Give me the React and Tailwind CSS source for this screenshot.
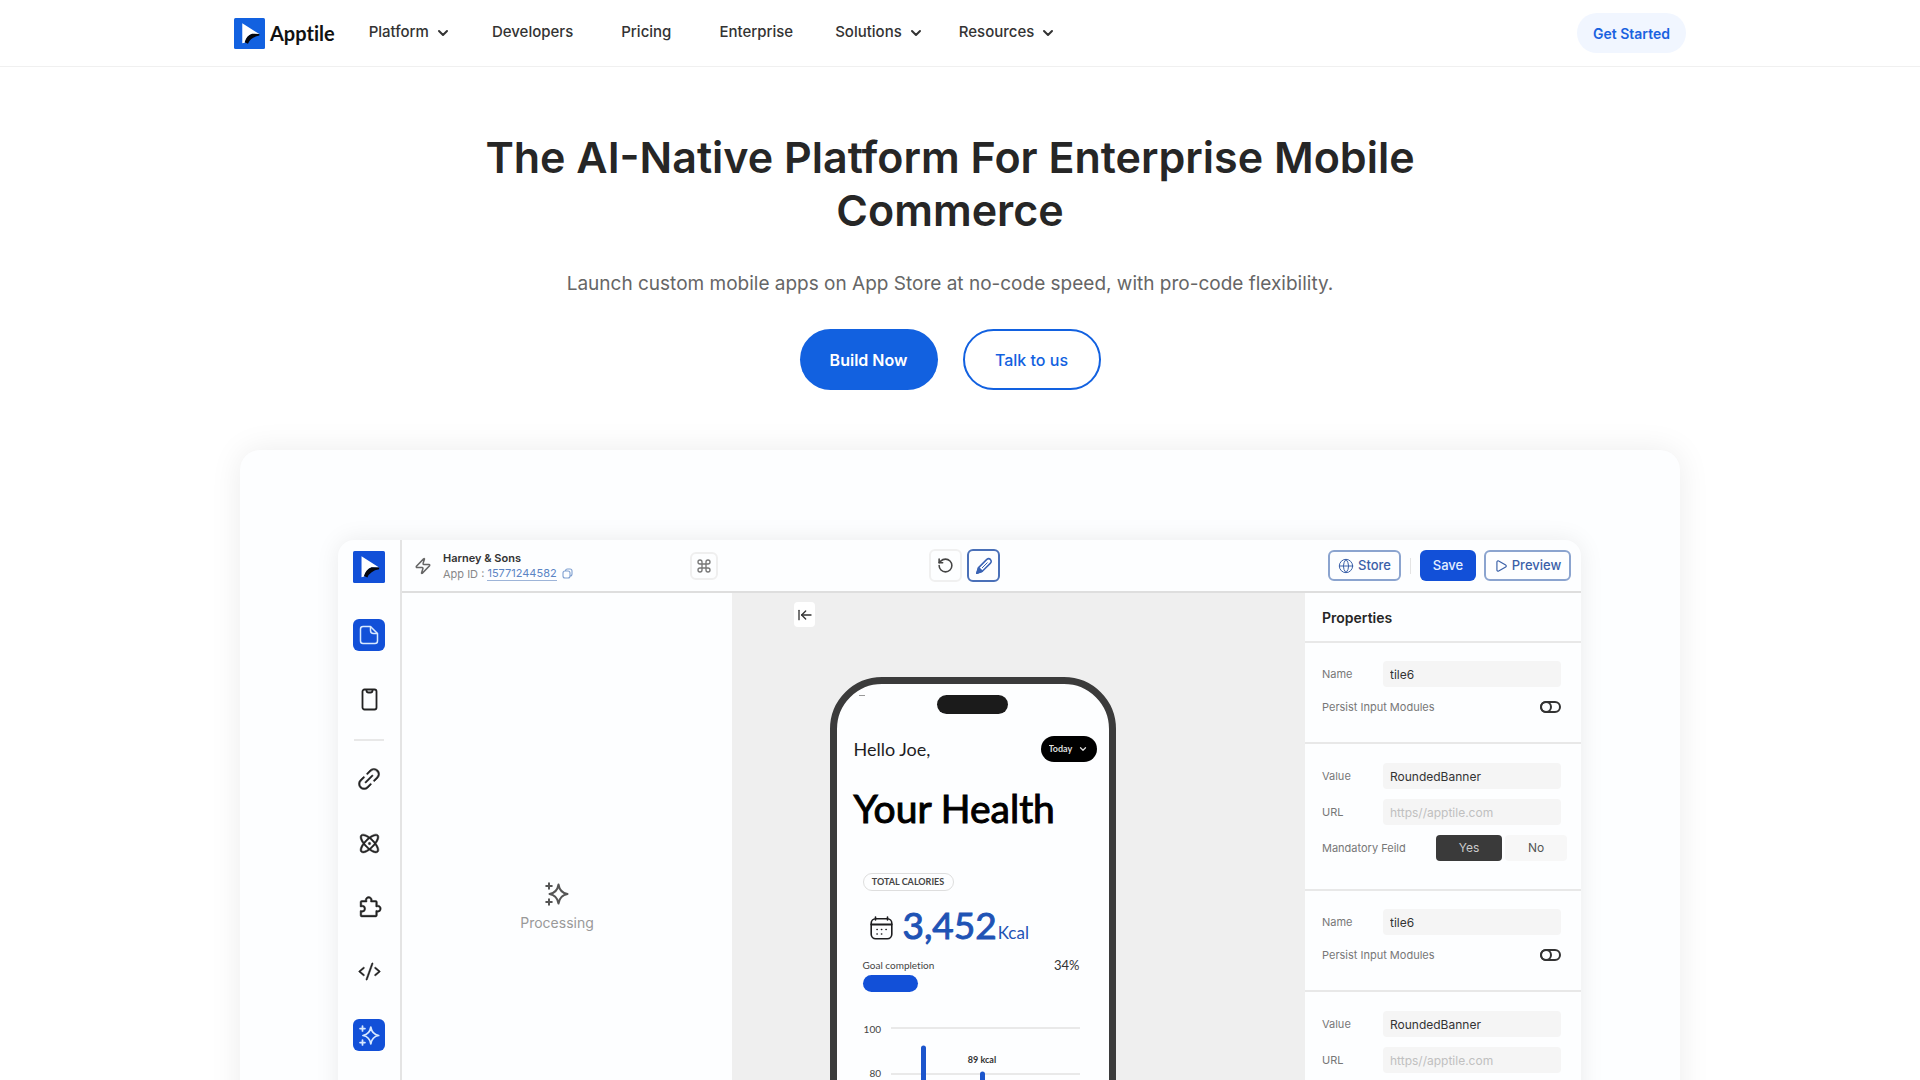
import { ArrowLeftToLine, ChevronDown, Command, Globe, Play, RotateCcw, Zap } from 'lucide-react';
import { PiAtom, PiCode, PiLinkSimple, PiPuzzlePiece } from 'react-icons/pi';
import clsx from 'clsx';

const NAV = [
  { label: 'Platform', menu: true },
  { label: 'Developers' },
  { label: 'Pricing' },
  { label: 'Enterprise' },
  { label: 'Solutions', menu: true },
  { label: 'Resources', menu: true },
];

function LogoMark({ size, fill }) {
  return (
    <svg width={size} height={size} viewBox="0 0 30 30" aria-hidden="true">
      <rect width="30" height="30" rx="1.5" fill={fill} />
      <path d="M8 5 L24.5 15.5 L17 15.5 Q12 18 10.5 24 L8 24.5 Z" fill="#fff" />
      <path d="M24.5 15.5 L17.5 15.2 Q12 17 10.3 23.5 L13.5 24.8 Q16 18.5 24.5 17 Z" fill="#05070d" />
    </svg>
  );
}

function NoteIcon() {
  return (
    <svg width="20" height="20" viewBox="0 0 20 20" fill="none" stroke="#d8e9ff" strokeWidth="1.5" strokeLinejoin="round">
      <path d="M4 1.5 H11.5 L18.5 8.5 V16 Q18.5 18.5 16 18.5 H4 Q1.5 18.5 1.5 16 V4 Q1.5 1.5 4 1.5 Z" />
      <path d="M11.5 1.5 V5.5 Q11.5 8.5 14.5 8.5 H18.5" />
    </svg>
  );
}

function DeviceIcon() {
  return (
    <svg width="17" height="23" viewBox="0 0 17 23" fill="none" stroke="#222" strokeWidth="1.8" strokeLinejoin="round">
      <rect x="1.5" y="1.5" width="14" height="20" rx="2" />
      <path d="M5.5 1.5 V2.5 Q5.5 4.5 7.5 4.5 H9.5 Q11.5 4.5 11.5 2.5 V1.5" />
    </svg>
  );
}

function SparkIcon({ size, color }) {
  return (
    <svg width={size} height={size} viewBox="0 0 24 24" fill="none" stroke={color} strokeWidth="2" strokeLinecap="round" strokeLinejoin="round">
      <path d="M13.5 2.5 Q14.8 10.7 22.5 12 Q14.8 13.3 13.5 21.5 Q12.2 13.3 4.5 12 Q12.2 10.7 13.5 2.5 Z" />
      <path d="M4 1.2 V6.8 M1.2 4 H6.8 M4 17.2 V22.8 M1.2 20 H6.8" />
    </svg>
  );
}

function CopyIcon() {
  return (
    <svg width="11" height="11" viewBox="0 0 11 11" fill="none" stroke="#7f9fd0" strokeWidth="1.1">
      <rect x="1" y="3" width="7" height="7" rx="2" />
      <path d="M3.5 3 Q3.5 1 5.5 1 H8 Q10 1 10 3 V6 Q10 8 8 8" />
    </svg>
  );
}

function PenIcon() {
  return (
    <svg width="18" height="18" viewBox="0 0 18 18" fill="none" stroke="#3a63b4" strokeWidth="1.5" strokeLinejoin="round">
      <path d="M1.8 16.2 L3.6 10.6 L11.8 2.4 Q13.7 0.9 15.4 2.4 Q17 4.2 15.5 6.1 L7.3 14.3 Z" />
      <path d="M1.8 16.2 L3.6 10.6 L7.3 14.3 Z" fill="#3a63b4" />
      <path d="M7 11 L12.5 5.500" strokeWidth="1" />
    </svg>
  );
}

function CalendarIcon() {
  return (
    <svg width="23" height="24" viewBox="0 0 23 24" fill="none" stroke="#1d1d1f" strokeWidth="1.6" strokeLinecap="round">
      <rect x="1.2" y="2.8" width="20.6" height="20" rx="4.5" />
      <path d="M1.5 8.5 H21.5" strokeWidth="2.2" />
      <path d="M5.5 1 V4 M17.5 1 V4" />
      <path d="M7 13.5 H7.2 M11.5 13.5 H11.7 M16 13.5 H16.2 M7 18 H7.2 M11.5 18 H11.7" />
    </svg>
  );
}

function Header() {
  return (
    <header className="border-b border-[#f0f0f0] bg-white">
      <div className="mx-auto flex h-[66px] w-full max-w-[1452px] items-center">
        <a href="#" className="flex items-center gap-[5px] font-['Lato',sans-serif] text-[20px] font-bold text-[#111] [font-variant-ligatures:none]">
          <LogoMark size={31} fill="#1261e0" />
          Apptile
        </a>
        <nav className="ml-4 flex items-center pb-px text-[15px] font-medium text-[#333]">
          {NAV.map((item) =>
            item.menu ? (
              <button key={item.label} type="button" className="flex items-center gap-[6px] pr-[17px] pl-[18px]">
                {item.label}
                <ChevronDown size={16} strokeWidth={3} />
              </button>
            ) : (
              <a key={item.label} href="#" className="px-6">
                {item.label}
              </a>
            )
          )}
        </nav>
        <a href="#" className="ml-auto flex h-10 items-center rounded-full bg-[#f1f6ff] px-4 text-[14px] font-semibold text-[#1a62e0]">
          Get Started
        </a>
      </div>
    </header>
  );
}

function Hero() {
  return (
    <section className="flex flex-col items-center pt-16 pr-5 text-center">
      <h1 className="max-w-[960px] text-[43px] leading-[53px] font-semibold text-[#262626]">
        The AI-Native Platform For Enterprise Mobile Commerce
      </h1>
      <p className="mt-8 text-[19px] leading-[30px] text-[#666]">
        Launch custom mobile apps on App Store at no-code speed, with pro-code flexibility.
      </p>
      <div className="mt-[30px] flex gap-[25px] text-[16px]">
        <a href="#" className="flex h-[61px] w-[138px] items-center justify-center rounded-full bg-[#1261e0] font-semibold text-white">
          Build Now
        </a>
        <a href="#" className="flex h-[61px] w-[138px] items-center justify-center rounded-full border-2 border-[#1261e0] font-medium text-[#1261e0]">
          Talk to us
        </a>
      </div>
    </section>
  );
}

function SideButton({ label, active, children }) {
  return (
    <button
      type="button"
      aria-label={label}
      className={clsx('flex h-8 w-8 items-center justify-center rounded-md text-[#222]', active && 'bg-[#1250d8]')}
    >
      {children}
    </button>
  );
}

function Sidebar() {
  return (
    <aside className="flex w-16 shrink-0 flex-col items-center border-r-2 border-[#e4e4e4] pt-[11px]">
      <LogoMark size={32} fill="#1250d8" />
      <div className="mt-9 flex flex-col gap-8">
        <SideButton label="Pages" active><NoteIcon /></SideButton>
        <SideButton label="Screens"><DeviceIcon /></SideButton>
      </div>
      <hr className="mt-6 w-[30px] border-t-2 border-[#e8e8e8]" />
      <div className="mt-[22px] flex flex-col gap-8">
        <SideButton label="Links"><PiLinkSimple size={26} strokeWidth={5} stroke="currentColor" /></SideButton>
        <SideButton label="Modules"><PiAtom size={25} strokeWidth={5} stroke="currentColor" /></SideButton>
        <SideButton label="Plugins"><PiPuzzlePiece size={25} strokeWidth={5} stroke="currentColor" className="-scale-x-100" /></SideButton>
        <SideButton label="Code"><PiCode size={23} strokeWidth={5} stroke="currentColor" /></SideButton>
        <SideButton label="AI" active><SparkIcon size={21} color="#d8e9ff" /></SideButton>
      </div>
    </aside>
  );
}

function TopBar() {
  return (
    <div className="grid h-[53px] shrink-0 grid-cols-[1fr_auto_1fr] items-center border-b-2 border-[#dedede] pr-[10px] pl-3">
      <div className="flex items-center">
        <Zap size={18} strokeWidth={2} className="text-[#666]" />
        <div className="ml-[11px] text-[11px] leading-4">
          <p className="font-semibold text-[#333]">Harney &amp; Sons</p>
          <p className="flex items-center text-[#888]">
            App ID :&nbsp;
            <a href="#" className="border-b border-[#9db4d8] leading-[14px] text-[#5b84c4]">15771244582</a>
            <button type="button" aria-label="Copy app ID" className="ml-[5px]"><CopyIcon /></button>
          </p>
        </div>
        <button type="button" aria-label="Shortcuts" className="ml-[117px] flex h-7 w-7 items-center justify-center rounded-md border-2 border-[#efefef]">
          <Command size={16} strokeWidth={2} className="text-[#777]" />
        </button>
      </div>
      <div className="mr-[56px] flex items-center gap-[5px]">
        <button type="button" aria-label="Undo" className="flex h-[33px] w-[33px] items-center justify-center rounded-md border-2 border-[#f0f0f0]">
          <RotateCcw size={17} strokeWidth={2.2} className="text-[#444]" />
        </button>
        <button type="button" aria-label="Edit" className="flex h-[33px] w-[33px] items-center justify-center rounded-md border-2 border-[#4a70b8]">
          <PenIcon />
        </button>
      </div>
      <div className="flex items-center justify-end text-[13px] font-medium text-[#3a60a8]">
        <button type="button" className="flex h-[31px] w-[73px] items-center justify-center gap-1 rounded-md border-2 border-[#8ba4cf]">
          <Globe size={16} strokeWidth={1.5} />
          Store
        </button>
        <span className="mx-[9px] h-4 w-px bg-[#e4e4e4]" />
        <button type="button" className="h-[31px] w-14 rounded-md bg-[#1250d8] text-[#e4efff]">Save</button>
        <button type="button" className="ml-2 flex h-[31px] w-[87px] items-center justify-center gap-1 rounded-md border-2 border-[#8ba4cf]">
          <Play size={14} strokeWidth={2} />
          Preview
        </button>
      </div>
    </div>
  );
}

function Phone() {
  return (
    <div className="mx-auto h-[600px] w-[286px] rounded-[52px] border-[7px] border-[#3b3b3b] bg-[#fdfeff] px-[17px] font-['Lato',sans-serif] text-[#1d1d1f] [font-variant-ligatures:none]">
      <div className="mt-[11px] grid grid-cols-[1fr_auto_1fr]">
        <span className="ml-[5px] h-px w-[6px] bg-[#999]" />
        <span className="h-[19px] w-[71px] rounded-full bg-[#1b1b1b]" />
      </div>
      <div className="-mr-[5px] mt-[22px] flex items-center justify-between">
        <p className="text-[18px] leading-[26px]">Hello Joe,</p>
        <div className="relative flex">
          <select aria-label="Period" className="h-[26px] w-14 appearance-none rounded-full bg-black pl-2 text-[9px] font-bold text-[#ddd]">
            <option>Today</option>
          </select>
          <ChevronDown size={10} strokeWidth={3} className="pointer-events-none absolute top-2 right-[9px] text-[#ddd]" />
        </div>
      </div>
      <h2 className="mt-[21px] text-[39px] leading-[50px] text-black [-webkit-text-stroke:1px]">Your Health</h2>
      <div className="px-[9px] pt-10">
        <span className="flex h-[18px] w-[91px] items-center justify-center rounded-full border border-[#dedede] text-[9px] font-bold text-[#444]">
          TOTAL CALORIES
        </span>
        <div className="mt-[14px] flex h-[46px] items-center pl-[7px]">
          <CalendarIcon />
          <p className="ml-[10px] pt-px text-[37px] leading-[46px] text-[#1f53b5] [-webkit-text-stroke:1px]">
            3,452<span className="ml-px text-[17px] [-webkit-text-stroke:0px]">Kcal</span>
          </p>
        </div>
        <div className="mt-[6px] flex items-center justify-between leading-4">
          <span className="text-[10px] text-[#444]">Goal completion</span>
          <span className="mr-[3px] text-[13px] text-[#333]">34%</span>
        </div>
        <div className="mt-[2px] h-[17px] w-[55px] rounded-full bg-[#1250d8]" />
        <svg width="219" height="160" viewBox="0 0 219 160" className="mt-[21px]">
          <g stroke="#e9e9e9" strokeWidth="2">
            <path d="M28 15 H217 M28 61 H217 M28 107 H217" />
          </g>
          <g fill="#444" fontSize="10" textAnchor="end">
            <text x="18" y="20">100</text>
            <text x="18" y="64">80</text>
          </g>
          <path d="M60.500 160 V35 M119.500 160 V61" stroke="#1c55cc" strokeWidth="5" strokeLinecap="round" />
          <text x="119" y="50" fontSize="9" fontWeight="700" fill="#333" textAnchor="middle">89 kcal</text>
        </svg>
      </div>
    </div>
  );
}

function Field({ id, label, ...input }) {
  return (
    <div className="flex h-[26px] items-center">
      <label htmlFor={id} className="w-[61px]">{label}</label>
      <input
        id={id}
        type="text"
        className="h-[26px] w-[178px] rounded-sm bg-[#f5f5f5] px-[7px] text-[12px] text-[#333] placeholder:text-[#c0c0c0]"
        {...input}
      />
    </div>
  );
}

function NameSection({ id }) {
  return (
    <div className="border-b-2 border-[#e8e8e8] pt-[18px] pb-[25px] pl-[17px]">
      <Field id={`${id}-name`} label="Name" defaultValue="tile6" />
      <label className="mt-[10px] flex h-5 w-[239px] items-center justify-between">
        Persist Input Modules
        <input
          type="checkbox"
          className="h-3 w-[21px] appearance-none rounded-full border-2 border-[#333] before:-mt-[2px] before:-ml-[2px] before:block before:h-3 before:w-3 before:rounded-full before:border-2 before:border-[#333]"
        />
      </label>
    </div>
  );
}

function ValueSection({ id, mandatory }) {
  return (
    <div className="flex flex-col gap-[10px] border-b-2 border-[#e8e8e8] pt-[19px] pb-7 pl-[17px]">
      <Field id={`${id}-value`} label="Value" defaultValue="RoundedBanner" />
      <Field id={`${id}-url`} label="URL" placeholder="https//apptile.com" />
      {mandatory && (
        <div className="flex h-[26px] items-center">
          <span className="w-[114px]">Mandatory Feild</span>
          <button type="button" aria-pressed="true" className="h-[26px] w-[66px] rounded-sm bg-[#3a3a3a] text-[12px] text-[#ccc]">Yes</button>
          <button type="button" aria-pressed="false" className="ml-[3px] h-[26px] w-[62px] rounded-sm bg-[#f7f7f7] text-[12px] text-[#555]">No</button>
        </div>
      )}
    </div>
  );
}

function Properties() {
  return (
    <aside className="w-[276px] shrink-0 text-[11px] text-[#777]">
      <h2 className="flex h-[50px] items-center border-b-2 border-[#e8e8e8] pl-[17px] text-[14px] font-semibold text-[#262626]">
        Properties
      </h2>
      <NameSection id="a" />
      <ValueSection id="b" mandatory />
      <NameSection id="c" />
      <ValueSection id="d" />
    </aside>
  );
}

function Editor() {
  return (
    <div className="mr-[99px] ml-[98px] flex rounded-2xl bg-[#fdfeff] shadow-[0_0_24px_rgba(0,0,0,0.08)]">
      <Sidebar />
      <div className="flex min-w-0 flex-1 flex-col">
        <TopBar />
        <div className="flex flex-1">
          <div className="flex w-[330px] shrink-0 flex-col items-center pt-[289px] pr-5">
            <SparkIcon size={24} color="#555" />
            <p className="mt-[7px] text-[14px] leading-5 text-[#999]">Processing</p>
          </div>
          <div className="flex-1 bg-[#efefef] pt-[9px] pr-[92px]">
            <button type="button" aria-label="Collapse" className="ml-[62px] flex h-[25px] w-[21px] items-center justify-center rounded-sm bg-white">
              <ArrowLeftToLine size={16} className="text-[#333]" />
            </button>
            <div className="mt-[50px]">
              <Phone />
            </div>
          </div>
          <Properties />
        </div>
      </div>
    </div>
  );
}

export default function App() {
  return (
    <div className="h-screen overflow-hidden bg-white font-['Inter',sans-serif]">
      <Header />
      <Hero />
      <main className="mx-auto mt-[60px] max-w-[1440px] rounded-[20px] bg-[#fdfeff] py-[90px] shadow-[0_0_32px_rgba(0,0,0,0.08)]">
        <Editor />
      </main>
    </div>
  );
}
